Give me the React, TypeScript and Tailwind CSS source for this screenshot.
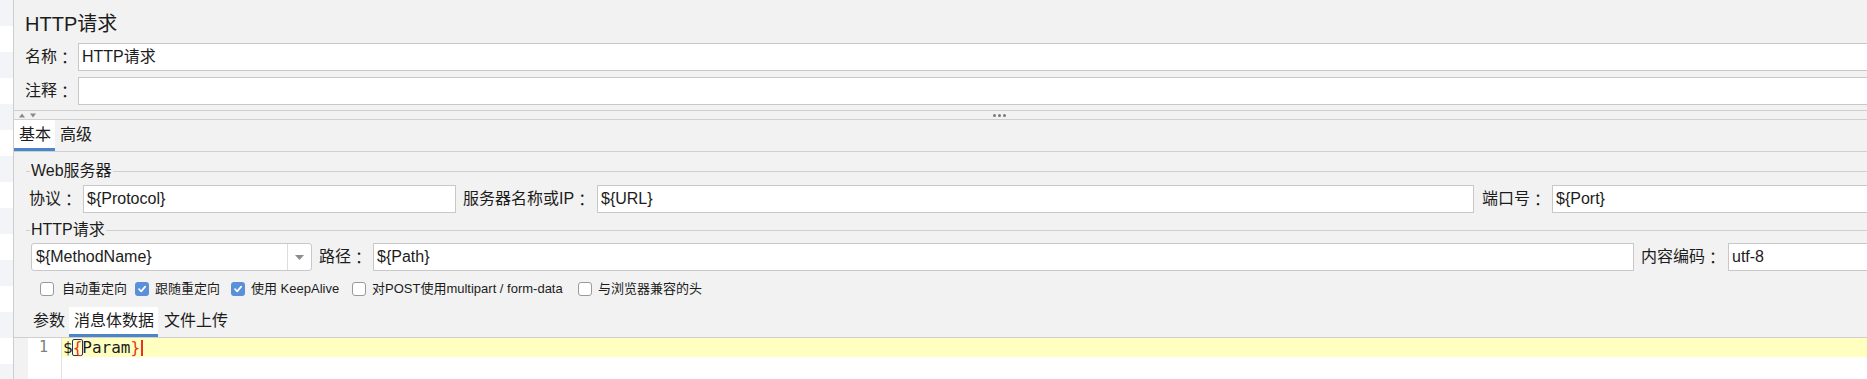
import React from "react";

const Check = ({ checked }: { checked: boolean }) =>
  checked ? (
    <span className="flex h-[14px] w-[14px] shrink-0 items-center justify-center rounded-[3px] bg-[#5b8fd9]">
      <svg width="10" height="10" viewBox="0 0 10 10">
        <path d="M2 5.2 L4.2 7.4 L8.2 2.6" stroke="white" strokeWidth="1.7" fill="none" strokeLinecap="round" strokeLinejoin="round" />
      </svg>
    </span>
  ) : (
    <span className="h-[14px] w-[14px] shrink-0 rounded-[3px] border border-[#9a9a9a] bg-white" />
  );

const Field = ({ text, className }: { text?: string; className: string }) => (
  <div className={"flex h-[28px] items-center border border-[#c8c8c8] bg-white pl-[3px] text-[16px] text-[#1c1c1c] " + className}>
    {text}
  </div>
);

const Label = ({ text, className }: { text: string; className: string }) => (
  <span className={"flex items-center whitespace-nowrap text-[16px] " + className}>
    {text}
    <span className="font-['Noto_Sans_CJK_TC',sans-serif]">：</span>
  </span>
);

const TitleLine = ({ title }: { title: string }) => (
  <div className="flex h-[20px] items-center pl-[12px]">
    <div className="h-px w-[4px] bg-[#d0d0d0]" />
    <span className="px-[1px] text-[16px] leading-none text-[#1c1c1c]">{title}</span>
    <div className="h-px flex-1 bg-[#d0d0d0]" />
  </div>
);

export default function App() {
  const rows = Array.from({ length: 15 });
  return (
    <div className="flex h-[379px] w-[1867px] overflow-hidden bg-[#f2f2f2] font-['Liberation_Sans','Noto_Sans_CJK_SC',sans-serif] text-[#1c1c1c]">
      {/* left tree strip */}
      <div className="flex w-[14px] shrink-0 flex-col border-r border-[#cdcdcd]">
        {rows.map((_, i) => (
          <div key={i} className={i % 2 === 0 ? "h-[26px] shrink-0 bg-[#f3f4f8]" : "h-[26px] shrink-0 bg-white"} />
        ))}
      </div>

      {/* main */}
      <div className="flex w-[1880px] shrink-0 flex-col">
        <div className="flex h-[43px] items-center pl-[11px] pt-[5px] text-[20px] leading-none">HTTP请求</div>

        <div className="flex h-[28px] items-center pl-[11px]">
          <Label text="名称" className="w-[53px]" />
          <Field text="HTTP请求" className="flex-1" />
        </div>
        <div className="mt-[6px] flex h-[28px] items-center pl-[11px]">
          <Label text="注释" className="w-[53px]" />
          <Field className="flex-1" />
        </div>

        {/* splitter */}
        <div className="mt-[5px] flex h-[10px] items-center border-y border-[#cfcfcf] pl-[5px]">
          <svg width="18" height="5" viewBox="0 0 18 5">
            <path d="M0 4.5 L3 0.5 L6 4.5 Z" fill="#8a8a8a" />
            <path d="M11 0.5 L17 0.5 L14 4.5 Z" fill="#8a8a8a" />
          </svg>
          <div className="ml-[956px] flex gap-[2px]">
            <span className="h-[3px] w-[3px] rounded-full bg-[#7a7a7a]" />
            <span className="h-[3px] w-[3px] rounded-full bg-[#7a7a7a]" />
            <span className="h-[3px] w-[3px] rounded-full bg-[#7a7a7a]" />
          </div>
        </div>

        {/* tabs */}
        <div className="flex h-[32px] border-b border-[#cfcfcf] text-[16px]">
          <div className="flex items-center border-b-[3px] border-[#4a86c8] bg-white pl-[5px] pr-[4px] pt-[1px]">基本</div>
          <div className="flex items-center pl-[5px] pb-[2px]">高级</div>
        </div>

        <div className="mt-[9px]">
          <TitleLine title="Web服务器" />
        </div>
        <div className="mt-[4px] flex h-[28px] items-center pl-[15px] text-[16px]">
          <Label text="协议" className="w-[54px]" />
          <Field text="${Protocol}" className="w-[373px]" />
          <Label text="服务器名称或IP" className="ml-[7px] w-[134px]" />
          <Field text="${URL}" className="w-[877px]" />
          <Label text="端口号" className="ml-[8px] w-[70px]" />
          <Field text="${Port}" className="flex-1" />
        </div>

        <div className="mt-[7px]">
          <TitleLine title="HTTP请求" />
        </div>
        <div className="mt-[3px] flex h-[28px] items-center pl-[17px] text-[16px]">
          <div className="flex h-[28px] w-[281px] items-stretch rounded-[3px] border border-[#c8c8c8] bg-white">
            <div className="flex flex-1 items-center pl-[4px]">${"{MethodName}"}</div>
            <div className="flex w-[24px] items-center justify-center border-l border-[#dcdcdc]">
              <svg width="9" height="5" viewBox="0 0 9 5">
                <path d="M0 0 L9 0 L4.5 5 Z" fill="#8c8c8c" />
              </svg>
            </div>
          </div>
          <Label text="路径" className="ml-[7px] w-[54px]" />
          <Field text="${Path}" className="w-[1261px]" />
          <Label text="内容编码" className="ml-[7px] w-[87px]" />
          <Field text="utf-8" className="flex-1" />
        </div>

        <div className="mt-[9px] flex h-[18px] items-center pl-[26px] text-[13px]">
          <div className="flex w-[95px] items-center gap-[8px]">
            <Check checked={false} />
            <span>自动重定向</span>
          </div>
          <div className="flex w-[96px] items-center gap-[6px]">
            <Check checked={true} />
            <span>跟随重定向</span>
          </div>
          <div className="flex w-[121px] items-center gap-[6px]">
            <Check checked={true} />
            <span>使用 KeepAlive</span>
          </div>
          <div className="flex w-[226px] items-center gap-[6px]">
            <Check checked={false} />
            <span>对POST使用multipart / form-data</span>
          </div>
          <div className="flex items-center gap-[6px]">
            <Check checked={false} />
            <span>与浏览器兼容的头</span>
          </div>
        </div>

        {/* sub tabs */}
        <div className="mt-[9px] flex h-[31px] border-b border-[#cfcfcf] pl-[14px] text-[16px]">
          <div className="flex items-center pl-[5px] pr-[4px] pb-[2px]">参数</div>
          <div className="flex items-center border-b-[3px] border-[#4a86c8] bg-white pl-[5px] pr-[4px] pt-[1px]">消息体数据</div>
          <div className="flex items-center pl-[6px] pb-[2px]">文件上传</div>
        </div>

        {/* editor */}
        <div className="flex flex-1 pl-[14px] font-['DejaVu_Sans_Mono',monospace] text-[16px]">
          <div className="w-[34px] border-r border-[#e2e2e2] bg-white">
            <div className="flex h-[19px] items-center justify-end pr-[13px] text-[15px] text-[#808080]">1</div>
          </div>
          <div className="flex flex-1 flex-col bg-white">
            <div className="flex h-[19px] items-center bg-[#ffffbf] pl-[1px] leading-none">
              <span>$</span>
              <span className="-mx-[1px] rounded-[2px] border border-[#1f2a9a] leading-[15px] text-[#e8331f]">{"{"}</span>
              <span>Param</span>
              <span className="text-[#e8331f]">{"}"}</span>
              <span className="ml-[1px] h-[16px] w-[2px] bg-[#e8331f]" />
            </div>
          </div>
        </div>
      </div>
    </div>
  );
}
